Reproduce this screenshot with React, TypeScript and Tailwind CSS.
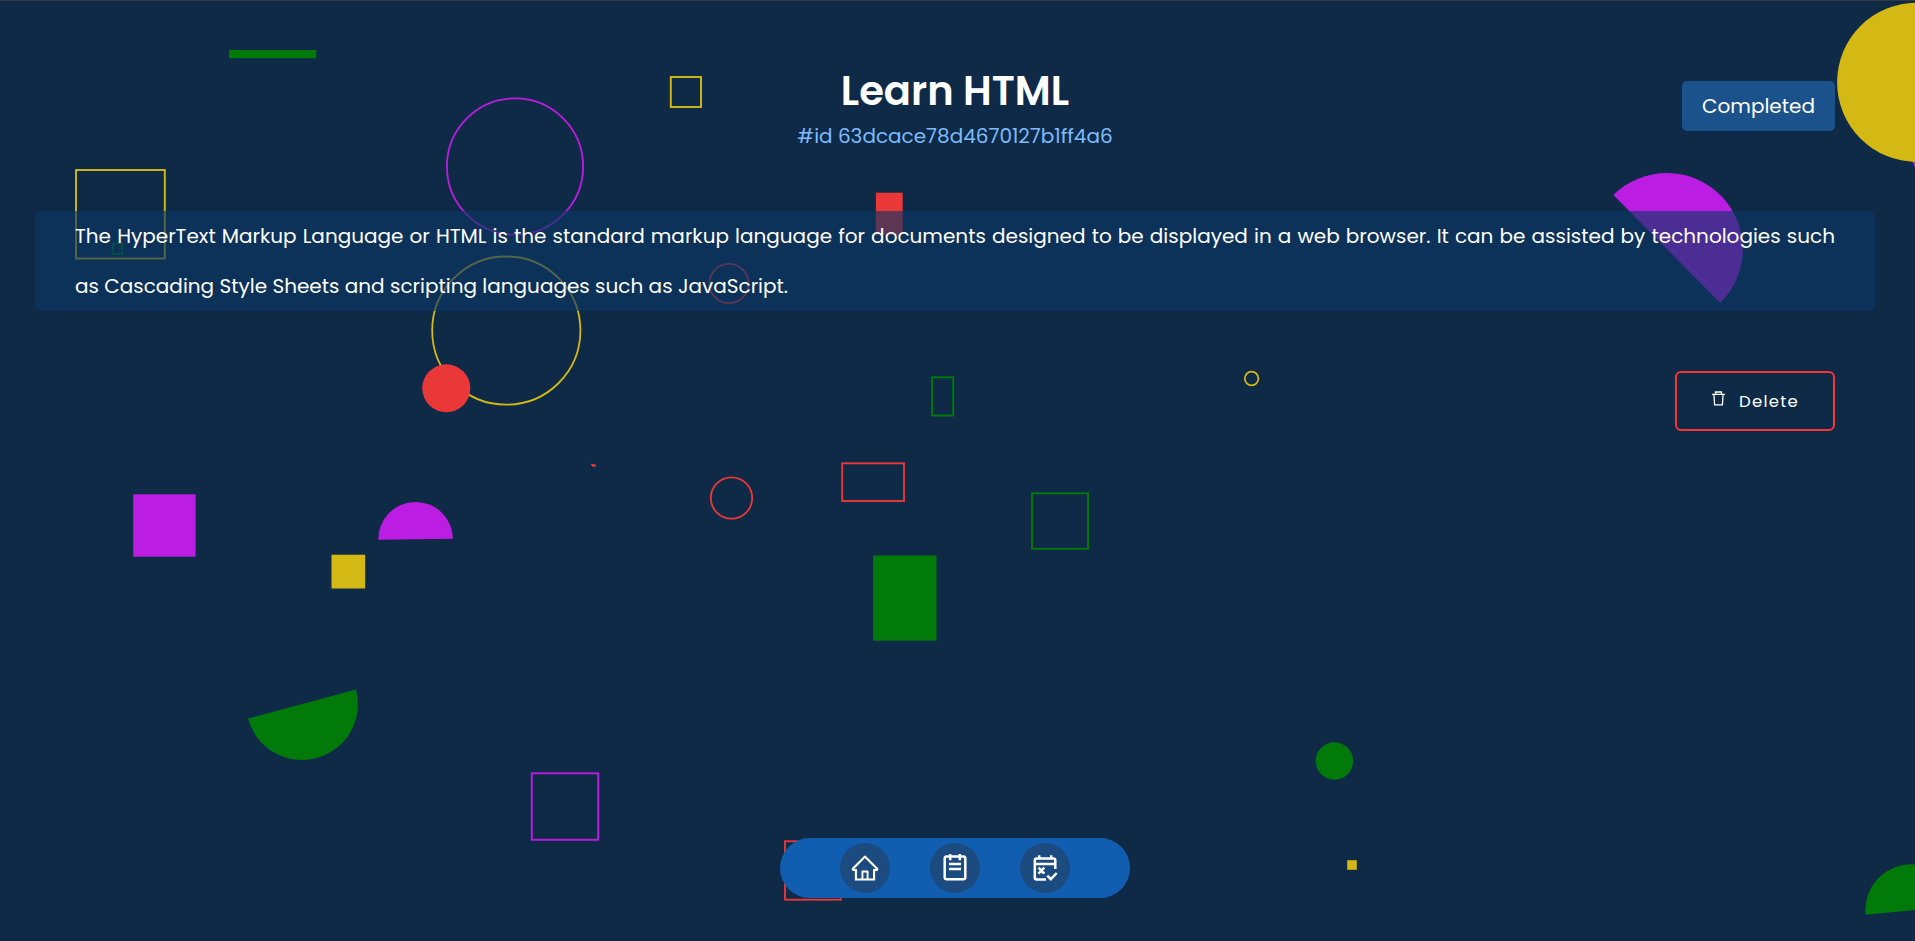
import { AiOutlineHome } from "react-icons/ai";

const Y = "#d4b814";
const P = "#bb1de2";
const G = "#027a0a";
const R = "#ea3737";

type BoxProps = { x: number; y: number; r: number; b: number; c: string; fill?: boolean };

// x, y, r and b are the outer edges of the shape.
function Box({ x, y, r, b, c, fill }: BoxProps) {
  return fill ? (
    <rect x={x} y={y} width={r - x} height={b - y} fill={c} />
  ) : (
    <rect x={x + 1} y={y + 1} width={r - x - 2} height={b - y - 2} fill="none" stroke={c} strokeWidth={1.9} />
  );
}

function Ring({ x, y, r, c }: { x: number; y: number; r: number; c: string }) {
  return <circle cx={x} cy={y} r={r - 0.9} fill="none" stroke={c} strokeWidth={1.8} />;
}

function Shapes() {
  return (
    <svg className="pointer-events-none absolute -top-px left-0 h-[941px] w-[1915px]" viewBox="0 0 1915 941">
      <Box x={229} y={50} r={316.3} b={58.3} c={G} fill />
      <Ring x={515} y={166.5} r={69} c={P} />
      <Box x={75} y={169} r={165.8} b={259.5} c={Y} />
      <Box x={112} y={242.7} r={123} b={255} c={G} />
      <Ring x={506.3} y={330.6} r={75} c={Y} />
      <circle cx={446.3} cy={388.3} r={24} fill={R} />
      <Box x={669.8} y={76} r={702} b={108} c={Y} />
      <Box x={875.9} y={192.7} r={902.7} b={235} c={R} fill />
      <Ring x={729} y={283.5} r={20.5} c={R} />
      <Box x={931} y={376.3} r={954.2} b={416.5} c={G} />
      <Ring x={1251.6} y={378.5} r={7.7} c={Y} />
      <path d="M1916 155 L1910 155 L1915 168 Z" fill={P} />
      <circle cx={1916.7} cy={82.3} r={79.6} fill={Y} />
      <path d="M1613.4 195 A70 70 0 0 1 1720.3 303 Z" fill={P} />
      <Box x={133.2} y={494.3} r={195.6} b={556.7} c={P} fill />
      <path d="M378.3 539.8 A30 30 0 0 1 453 538.7 Z" fill={P} />
      <Box x={331.5} y={554.7} r={365.2} b={588.5} c={Y} fill />
      <path d="M356 689.5 A50 50 0 0 1 248 718.6 Z" fill={G} />
      <Box x={530.8} y={772.3} r={599.2} b={840.8} c={P} />
      <path d="M590.5 463.7 L596 464.5 L595.5 466.8 L592.5 466.8 Z" fill={R} />
      <Box x={784} y={840.3} r={841.7} b={900.7} c={R} />
      <circle cx={1334.4} cy={761} r={18.7} fill={G} />
      <Box x={1347.2} y={860.2} r={1356.8} b={869.8} c={Y} fill />
      <path d="M1865.5 914.7 A40 40 0 0 1 1957.1 906 Z" fill={G} />
      <Ring x={731.5} y={498} r={21.6} c={R} />
      <Box x={841.2} y={462.3} r={905} b={502} c={R} />
      <Box x={873.2} y={555.5} r={936.5} b={640.7} c={G} fill />
      <Box x={1031} y={492.3} r={1089} b={549.8} c={G} />
    </svg>
  );
}

function TrashIcon() {
  return (
    <svg className="mb-[5px]" width="13" height="15" viewBox="0 0 13 15" fill="none" stroke="white" strokeWidth="1.3">
      <path d="M0 3.300h13M3.500 3.300V1h6v2.300M1.900 3.300l0.700 10.500h7.800l0.700-10.500" />
    </svg>
  );
}

function NotesIcon() {
  return (
    <svg width="30" height="30" viewBox="0 0 30 30" fill="none" stroke="white" strokeWidth="2.5">
      <rect x="4.7" y="3.5" width="20.600" height="22.700" rx="2" />
      <path d="M10.200 1v6.200M19.800 1v6.200M9 11h12M9 16h12" />
    </svg>
  );
}

function TasksIcon() {
  return (
    <svg width="30" height="30" viewBox="0 0 30 30" fill="none" stroke="white" strokeWidth="2.5">
      <path d="M25.300 16V7.500a2 2 0 0 0-2-2H6.800a2 2 0 0 0-2 2V24.500a2 2 0 0 0 2 2H16M9.200 2.300v3.500M21.200 2.300v3.500M4.800 11h20.500M8.500 14.700l5.800 6M14.300 14.700l-5.800 6M17.300 22.700l3.500 3.500 5.900-6.200" />
    </svg>
  );
}

export default function App() {
  return (
    <div className="relative flex h-[941px] w-[1915px] flex-col overflow-hidden border-t border-[#35353f] bg-[#0f2a47] font-[Poppins,Inter,sans-serif] text-white">
      <Shapes />
      <header className="relative grid h-[210px] grid-cols-[1fr_auto_1fr] items-start pr-20 pl-[75px]">
        <span />
        <div className="flex flex-col items-center pt-[60px]">
          <h1 className="text-[40px] leading-[60px] font-semibold">Learn HTML</h1>
          <p className="text-[20px] leading-[30px] text-[#7dbbff]">#id 63dcace78d4670127b1ff4a6</p>
        </div>
        <span className="mt-20 flex h-[50px] w-[153px] items-center justify-center justify-self-end rounded-[5px] bg-[#1b528c] text-[20px]">
          Completed
        </span>
      </header>
      <p className="relative mr-10 ml-[35px] h-[100px] rounded-[6px] bg-[#0c3766]/64 px-10 text-justify text-[20px] leading-[50px]">
        The HyperText Markup Language or HTML is the standard markup language for documents designed to be displayed in a
        web browser. It can be assisted by technologies such as Cascading Style Sheets and scripting languages such as
        JavaScript.
      </p>
      <button className="relative mt-[60px] mr-20 flex h-[60px] w-40 items-center gap-3.5 self-end rounded-[6px] border-2 border-[#fa3434] pl-[35px] text-[16.5px] tracking-[1.25px]">
        <TrashIcon />
        <span className="pt-0.5">Delete</span>
      </button>
      <nav className="relative mt-auto mb-[43px] ml-[780px] flex h-[60px] w-[350px] items-center justify-center gap-10 rounded-full bg-[#115eb1]">
        <a className="flex size-[50px] items-center justify-center rounded-full bg-[#1b4b7f]">
          <AiOutlineHome size={30} />
        </a>
        <a className="flex size-[50px] items-center justify-center rounded-full bg-[#1b4b7f]">
          <NotesIcon />
        </a>
        <a className="flex size-[50px] items-center justify-center rounded-full bg-[#1b4b7f]">
          <TasksIcon />
        </a>
      </nav>
    </div>
  );
}
